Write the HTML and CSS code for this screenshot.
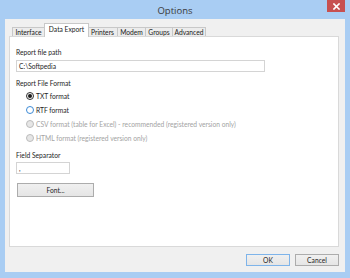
FILE: index.html
```html
<!DOCTYPE html>
<html>
<head>
<meta charset="utf-8">
<link rel="stylesheet" href="styles.css">
</head>
<body>
<div class="window">
  <div class="titlebar">
    <span class="title">Options</span>
    <button class="close" aria-label="Close">
      <svg width="7" height="7" viewBox="0 0 7 7"><path d="M1 1L6 6M6 1L1 6" stroke="#fff" stroke-width="1.6" stroke-linecap="square"/></svg>
    </button>
  </div>
  <div class="client">
    <div class="tabs">
      <div class="tab t-interface">Interface</div>
      <div class="tab selected t-data">Data Export</div>
      <div class="tab t-printers">Printers</div>
      <div class="tab t-modem">Modem</div>
      <div class="tab t-groups">Groups</div>
      <div class="tab t-advanced">Advanced</div>
    </div>
    <div class="panel">
      <div class="label l1">Report file path</div>
      <div class="input wide">C:\Softpedia</div>
      <div class="label l2">Report File Format</div>
      <div class="radio-group">
        <div class="radio-row"><span class="radio checked"></span><span class="rtext">TXT format</span></div>
        <div class="radio-row"><span class="radio hover"></span><span class="rtext">RTF format</span></div>
        <div class="radio-row disabled"><span class="radio"></span><span class="rtext">CSV format (table for Excel) - recommended (registered version only)</span></div>
        <div class="radio-row disabled"><span class="radio"></span><span class="rtext">HTML format (registered version only)</span></div>
      </div>
      <div class="label l3">Field Separator</div>
      <div class="input narrow">,</div>
      <button class="btn font-btn">Font...</button>
    </div>
    <div class="actions">
      <button class="btn default">OK</button>
      <button class="btn">Cancel</button>
    </div>
  </div>
</div>
</body>
</html>
```
FILE: styles.css
```css
* { box-sizing: border-box; }
html, body { margin: 0; padding: 0; }
body {
  width: 350px;
  height: 278px;
  overflow: hidden;
  font-family: Lato, "Open Sans", sans-serif;
  font-size: 6.7px;
  color: #1e1e1e;
  background: #a9cdf3;
}
.window {
  width: 350px;
  height: 278px;
  display: flex;
  flex-direction: column;
  background: #a9cdf3;
}
.titlebar {
  height: 19px;
  position: relative;
  display: flex;
  align-items: center;
  justify-content: center;
}
.title {
  font-family: "Open Sans", sans-serif;
  font-size: 9.5px;
  color: #3a3a3a;
  line-height: 19px;
  padding-top: 1px;
}
.close {
  position: absolute;
  top: 0;
  right: 5px;
  width: 18px;
  height: 12px;
  border: none;
  padding: 0;
  background: #c75050;
  display: flex;
  align-items: center;
  justify-content: center;
}
.close svg { display: block; }
.client {
  flex: 1;
  margin: 0 5px 6px 5px;
  background: #f0f0f0;
  display: flex;
  flex-direction: column;
  padding: 0 6px 0 4px;
}
.tabs {
  display: flex;
  align-items: flex-end;
  height: 13px;
  margin-top: 4px;
  padding-left: 3px;
}
.tab {
  height: 9px;
  border: 1px solid #c8c8c8;
  border-bottom: none;
  background: #ececec;
  line-height: 8px;
  font-size: 6.7px;
  text-align: center;
  color: #222;
  margin-left: -1px;
  white-space: nowrap;
}
.tab:first-child { margin-left: 0; }
.tab.selected {
  height: 14px;
  margin-bottom: -1px;
  background: #fff;
  position: relative;
  z-index: 1;
  line-height: 11px;
  margin-left: -1px;
  margin-right: -1px;
}
.t-interface { width: 33px; }
.t-data { width: 45px; }
.t-printers { width: 31px; }
.t-modem { width: 29px; }
.t-groups { width: 28px; }
.t-advanced { width: 34px; }
.panel {
  height: 211px;
  background: #fff;
  border: 1px solid #d9d9d9;
  padding: 0 0 0 6px;
  display: flex;
  flex-direction: column;
  align-items: flex-start;
}
.label {
  height: 10px;
  line-height: 10px;
  white-space: nowrap;
}
.l1 { margin-top: 10px; }
.l2 { margin-top: 6px; }
.l3 { margin-top: 5px; }
.input {
  height: 12px;
  border: 1px solid #d4d4d4;
  background: #fff;
  line-height: 10px;
  padding-left: 2px;
}
.wide { width: 249px; margin-top: 3px; }
.narrow { width: 54px; margin-top: 2px; }
.radio-group { margin-top: 1px; }
.radio-row {
  height: 14px;
  display: flex;
  align-items: center;
  padding-left: 10px;
  white-space: nowrap;
}
.radio {
  width: 8px;
  height: 8px;
  border-radius: 50%;
  border: 1px solid #bcbcbc;
  background: #e6e6e6;
  margin-right: 2px;
  display: flex;
  align-items: center;
  justify-content: center;
}
.radio.checked {
  border-color: #333;
  background: #f4f4f4;
}
.radio.checked::after {
  content: "";
  width: 4px;
  height: 4px;
  border-radius: 50%;
  background: #1a1a1a;
}
.radio.hover {
  border-color: #3c8ad6;
  background: #fff;
}
.disabled { color: #a3a3a3; }
.btn {
  font-family: inherit;
  font-size: 6.7px;
  color: #1e1e1e;
  border: 1px solid #acacac;
  background: linear-gradient(#f0f0f0, #e5e5e5);
  padding: 0;
  line-height: 10px;
}
.font-btn {
  width: 77px;
  height: 14px;
  margin-top: 9px;
  margin-left: 1px;
}
.actions {
  display: flex;
  justify-content: flex-end;
  gap: 5px;
  margin-top: 7px;
}
.actions .btn {
  width: 44px;
  height: 12px;
}
.btn.default { border-color: #7eb4ea; }
```
